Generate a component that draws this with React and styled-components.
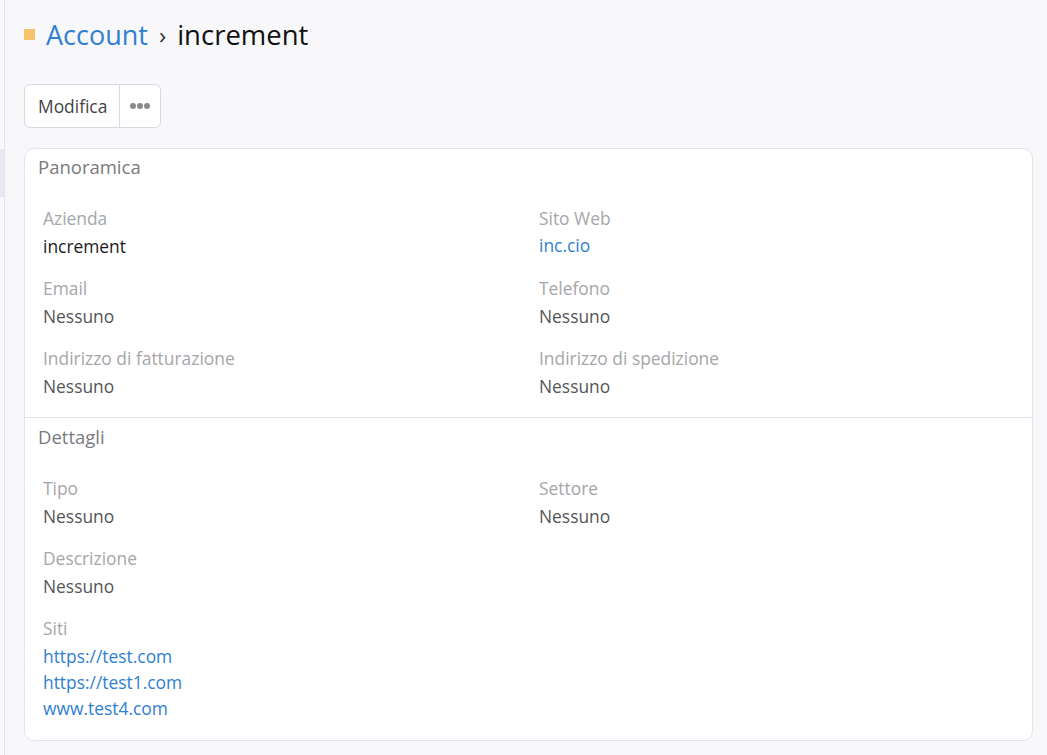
import React from 'react';
import styled, { createGlobalStyle } from 'styled-components';

const GlobalStyle = createGlobalStyle`
  html, body {
    margin: 0;
    padding: 0;
    background: #f8f8fb;
    font-family: 'Open Sans', 'Liberation Sans', sans-serif;
    color: #333;
  }
`;

const Shell = styled.div`
  display: flex;
  min-height: 755px;
`;

const Rail = styled.div`
  width: 4px;
  flex-shrink: 0;
  border-right: 1px solid #e3e5ee;
  padding-top: 149px;
  background: #f8f8fb;
`;

const RailItem = styled.div`
  height: 48px;
  background: #e6e9f1;
`;

const Main = styled.main`
  flex: 1;
  padding: 17px 14px 0 19px;
`;

const Header = styled.h1`
  display: flex;
  align-items: center;
  margin: 0;
  font-size: 27px;
  font-weight: 400;
  line-height: 36px;
`;

const Marker = styled.span`
  width: 11px;
  height: 11px;
  background: #f6c46c;
  margin-right: 11px;
  margin-top: -2px;
`;

const Crumb = styled.a`
  color: #2f80d1;
  text-decoration: none;
`;

const Sep = styled.span`
  margin: 0 11px 0 11px;
  color: #333;
  font-size: 24px;
`;

const Current = styled.span`
  color: #111;
  font-size: 27.5px;
`;

const Toolbar = styled.div`
  display: inline-flex;
  margin-top: 31px;
  background: #fff;
  border: 1px solid #d6d8e2;
  border-radius: 6px;
  height: 42px;
  overflow: hidden;
`;

const ToolButton = styled.button`
  display: flex;
  align-items: center;
  justify-content: center;
  gap: 1px;
  border: none;
  background: transparent;
  font-family: inherit;
  font-size: 17.4px;
  color: #444;
  padding: 0 ${(p) => (p.$narrow ? 0 : 12)}px 0 ${(p) => (p.$narrow ? 0 : 13)}px;
  width: ${(p) => (p.$narrow ? '41px' : 'auto')};
  border-left: ${(p) => (p.$narrow ? '1px solid #d6d8e2' : 'none')};
  cursor: pointer;
`;

const Dot = styled.span`
  width: 6px;
  height: 6px;
  border-radius: 50%;
  background: #8a8a8f;
`;

const Card = styled.section`
  margin-top: 20px;
  background: #fff;
  border: 1px solid #e2e3ef;
  border-radius: 10px;
`;

const Panel = styled.div`
  padding: 5px 0 3px;
  & + & {
    border-top: 1px solid #e2e3ef;
    padding-top: 6px;
  }
  &:last-child {
    padding-bottom: 5px;
  }
`;

const PanelTitle = styled.h2`
  margin: 0;
  padding-left: 13px;
  font-size: 18.5px;
  font-weight: 400;
  line-height: 26px;
  color: #7a7a7e;
`;

const Fields = styled.div`
  display: grid;
  grid-template-columns: 496px 1fr;
  margin-top: 24px;
  padding-left: 18px;
`;

const Field = styled.div`
  margin-bottom: 14px;
  grid-column: ${(p) => (p.$full ? '1 / -1' : 'auto')};
`;

const Label = styled.div`
  font-size: 17.4px;
  line-height: 28px;
  color: #a6a6aa;
`;

const Value = styled.div`
  font-size: 17.4px;
  line-height: 28px;
  color: ${(p) => (p.$strong ? '#1a1a1a' : '#555')};
`;

const Link = styled.a`
  display: block;
  font-size: 17.4px;
  line-height: 26px;
  color: #2f80d1;
  text-decoration: none;
`;

const LinkList = styled.div`
  padding-top: 1px;
`;

const overview = [
  { label: 'Azienda', value: 'increment', strong: true },
  { label: 'Sito Web', link: 'inc.cio' },
  { label: 'Email', value: 'Nessuno' },
  { label: 'Telefono', value: 'Nessuno' },
  { label: 'Indirizzo di fatturazione', value: 'Nessuno' },
  { label: 'Indirizzo di spedizione', value: 'Nessuno' },
];

const sites = ['https://test.com', 'https://test1.com', 'www.test4.com'];

const FieldView = ({ f }) => (
  <Field $full={f.full}>
    <Label>{f.label}</Label>
    {f.link ? (
      <Link href="#">{f.link}</Link>
    ) : (
      <Value $strong={f.strong}>{f.value}</Value>
    )}
  </Field>
);

const App = () => (
  <>
    <GlobalStyle />
    <Shell>
      <Rail>
        <RailItem />
      </Rail>
      <Main>
        <Header>
          <Marker />
          <Crumb href="#">Account</Crumb>
          <Sep>›</Sep>
          <Current>increment</Current>
        </Header>

        <Toolbar>
          <ToolButton>Modifica</ToolButton>
          <ToolButton $narrow aria-label="Altro">
            <Dot />
            <Dot />
            <Dot />
          </ToolButton>
        </Toolbar>

        <Card>
          <Panel>
            <PanelTitle>Panoramica</PanelTitle>
            <Fields>
              {overview.map((f) => (
                <FieldView key={f.label} f={f} />
              ))}
            </Fields>
          </Panel>
          <Panel>
            <PanelTitle>Dettagli</PanelTitle>
            <Fields>
              <FieldView f={{ label: 'Tipo', value: 'Nessuno' }} />
              <FieldView f={{ label: 'Settore', value: 'Nessuno' }} />
              <FieldView f={{ label: 'Descrizione', value: 'Nessuno', full: true }} />
              <Field $full>
                <Label>Siti</Label>
                <LinkList>
                  {sites.map((s) => (
                    <Link key={s} href="#">
                      {s}
                    </Link>
                  ))}
                </LinkList>
              </Field>
            </Fields>
          </Panel>
        </Card>
      </Main>
    </Shell>
  </>
);

export default App;
